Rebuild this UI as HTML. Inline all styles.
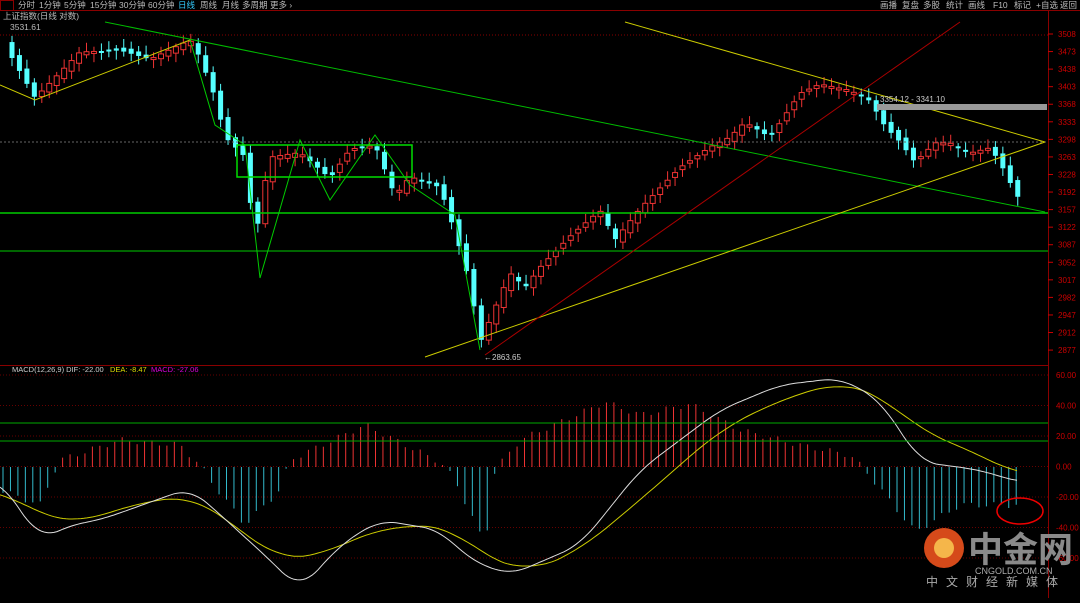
<!DOCTYPE html><html><head><meta charset="utf-8"><style>
body{margin:0;background:#000;width:1080px;height:598px;overflow:hidden;font-family:"Liberation Sans","Noto Sans CJK SC",sans-serif}
svg text{font-family:"Liberation Sans","Noto Sans CJK SC",sans-serif}
</style></head><body>
<svg id="s" width="1080" height="598" xmlns="http://www.w3.org/2000/svg">
<rect width="1080" height="598" fill="#000"/>
<line x1="0" y1="10.5" x2="1080" y2="10.5" stroke="#8a0000"/>
<rect x="0.5" y="0.5" width="13" height="10" fill="none" stroke="#8a0000"/>
<g font-size="8.5" fill="#bbb">
<text x="18" y="8">分时</text><text x="39" y="8">1分钟</text><text x="64" y="8">5分钟</text><text x="90" y="8">15分钟</text><text x="119" y="8">30分钟</text><text x="148" y="8">60分钟</text><text x="178" y="8" fill="#3cf">日线</text><text x="200" y="8">周线</text><text x="222" y="8">月线</text><text x="242" y="8">多周期</text><text x="270" y="8">更多 ›</text>
<text x="880" y="8">画播</text><text x="902" y="8">复盘</text><text x="923" y="8">多股</text><text x="946" y="8">统计</text><text x="968" y="8">画线</text><text x="993" y="8">F10</text><text x="1014" y="8">标记</text><text x="1036" y="8">+自选</text><text x="1060" y="8">返回</text>
<text x="3" y="19">上证指数(日线 对数)</text>
<text x="10" y="30">3531.61</text>
</g>
<g font-size="7.5" fill="#ccc"><text x="12" y="372">MACD(12,26,9) DIF: -22.00</text><text x="110" y="372" fill="#dd0">DEA: -8.47</text><text x="151" y="372" fill="#d0d">MACD: -27.06</text></g>
<line x1="1048.5" y1="11" x2="1048.5" y2="598" stroke="#8a0000"/>
<line x1="0" y1="365.5" x2="1048" y2="365.5" stroke="#8a0000"/>
<g id="ax" font-size="8" fill="#c00"></g>
<g id="c"></g>
<g fill="none">
<line x1="0" y1="213" x2="1048" y2="213" stroke="#0c0" stroke-width="1.5"/>
<line x1="0" y1="251" x2="1048" y2="251" stroke="#0c0"/>
<line x1="0" y1="142" x2="1048" y2="142" stroke="#666" stroke-dasharray="2,2"/>
<line x1="0" y1="35" x2="1048" y2="35" stroke="#800" stroke-dasharray="1,2"/>
<line x1="0" y1="423" x2="1048" y2="423" stroke="#0a0"/>
<line x1="0" y1="441" x2="1048" y2="441" stroke="#0a0"/>
<line x1="105" y1="22" x2="1045" y2="212" stroke="#0b0"/>
<line x1="625" y1="22" x2="1045" y2="142" stroke="#cc0"/>
<line x1="425" y1="357" x2="1045" y2="142" stroke="#cc0"/>
<polyline points="0,85 35,100 190,40" stroke="#cc0"/>
<line x1="485" y1="355" x2="960" y2="22" stroke="#a00"/>
<rect x="237" y="145" width="175" height="32" stroke="#0d0" stroke-width="1.5"/>
<polyline points="190,40 215,125 245,145 260,278 300,140 330,200 375,135 410,185 455,215 480,350" stroke="#0c0"/>
<rect x="877" y="104" width="170" height="6" fill="#999"/>
<ellipse cx="1020" cy="511" rx="23" ry="13" stroke="#e00" stroke-width="1.5"/>
</g>
<g font-size="8" fill="#ccc"><text x="880" y="102">3354.12 - 3341.10</text><text x="484" y="360">←2863.65</text></g>
<circle cx="944" cy="548" r="20" fill="#d54a1a"/><circle cx="944" cy="548" r="10" fill="#f5b64a"/>
<text x="968" y="562" font-size="35" fill="#8a8a8a" font-weight="bold">中金网</text>
<text x="975" y="574" font-size="9" fill="#aaa">CNGOLD.COM.CN</text>
<text x="926" y="586" font-size="12" fill="#aaa" letter-spacing="8">中文财经新媒体</text>
</svg>
<script>
var S="http://www.w3.org/2000/svg",c=document.getElementById('c'),ax=document.getElementById('ax');
function el(t,a,p){var e=document.createElementNS(S,t);for(var k in a)e.setAttribute(k,a[k]);(p||c).appendChild(e);return e}
var pl=[3508,3473,3438,3403,3368,3333,3298,3263,3228,3192,3157,3122,3087,3052,3017,2982,2947,2912,2877];
pl.forEach(function(v,i){var y=34+i*17.56;el('text',{x:1058,y:y+3},ax).textContent=v;el('line',{x1:1048,x2:1053,y1:y,y2:y,stroke:'#c00'},ax)});
["60.00","40.00","20.00","0.00","-20.00","-40.00","-60.00"].forEach(function(v,i){var y=375+i*30.5;el('text',{x:1056,y:y+3},ax).textContent=v;el('line',{x1:0,x2:1048,y1:y,y2:y,stroke:'#600','stroke-dasharray':'1,2'})});
function interp(P,x){if(x<=P[0][0])return P[0][1];for(var i=0;i<P.length-1;i++)if(x>=P[i][0]&&x<=P[i+1][0])return P[i][1]+(P[i+1][1]-P[i][1])*(x-P[i][0])/(P[i+1][0]-P[i][0]);return P[P.length-1][1]}
var K=[[0,40],[12,55],[35,95],[60,70],[80,50],[120,50],[150,60],[190,42],[200,60],[215,100],[225,140],[245,160],[255,245],[262,200],[270,160],[300,155],[330,180],[350,150],[375,145],[395,195],[410,175],[440,185],[455,230],[470,280],[480,340],[495,305],[510,270],[525,285],[540,265],[570,235],[600,210],[615,240],[640,210],[680,170],[710,150],[730,140],[745,125],[770,140],[800,95],[820,85],[850,90],[870,100],[885,125],[900,140],[915,160],[935,140],[950,140],[970,150],[990,145],[1000,160],[1010,180],[1018,195]];
var prev=interp(K,4);
for(var x=12;x<=1018;x+=7.45){var y=interp(K,x);var n=Math.sin(x*1.7)*6;var o=prev+Math.sin(x*0.9)*3,cl=y+n*0.5;var t=Math.min(o,cl),b=Math.max(o,cl);if(b-t<2)b=t+2;var hi=t-3-Math.abs(Math.sin(x))*6,lo=b+3+Math.abs(Math.cos(x))*6;var down=cl>o;var col=down?'#5ff':'#e33';
el('line',{x1:x,x2:x,y1:hi,y2:lo,stroke:col});
if(down)el('rect',{x:x-2.5,y:t,width:5,height:b-t,fill:col});else el('rect',{x:x-2.5,y:t,width:5,height:b-t,fill:'#000',stroke:col});prev=cl;}
var H=[[0,490],[40,505],[55,470],[60,460],[120,440],[180,445],[200,465],[210,480],[245,525],[280,490],[290,460],[365,425],[440,462],[455,480],[485,545],[495,470],[520,440],[605,402],[640,415],[690,404],[740,430],[800,445],[850,455],[865,470],[915,532],[960,505],[1018,505]];
for(var x=3;x<=1018;x+=7.45){var y=interp(H,x)+Math.sin(x*2.3)*3;el('line',{x1:x,x2:x,y1:467,y2:y,stroke:y<467?'#e33':'#3bc'});}
var D=[[0,480],[40,540],[70,525],[100,520],[190,488],[215,510],[270,560],[300,590],[340,545],[380,520],[440,530],[470,560],[510,575],[580,545],[640,470],[720,410],[780,385],[840,378],[880,400],[920,462],[980,470],[1018,482]];
var E=[[0,490],[40,515],[80,523],[130,505],[190,495],[220,515],[280,560],[320,555],[380,528],[450,525],[480,555],[530,572],[580,550],[640,500],[720,430],[780,400],[840,382],[880,395],[920,430],[980,455],[1018,475]];
function pts(A,w){var s='';for(var x=0;x<=1018;x+=3){var sum=0,n=0;for(var d=-w;d<=w;d+=2){var xx=Math.max(0,Math.min(1018,x+d));sum+=interp(A,xx);n++}s+=x+','+(sum/n).toFixed(1)+' '}return s}
el('polyline',{points:pts(E,30),fill:'none',stroke:'#cc0'});
el('polyline',{points:pts(D,18),fill:'none',stroke:'#ddd'});
</script>
</body></html>
